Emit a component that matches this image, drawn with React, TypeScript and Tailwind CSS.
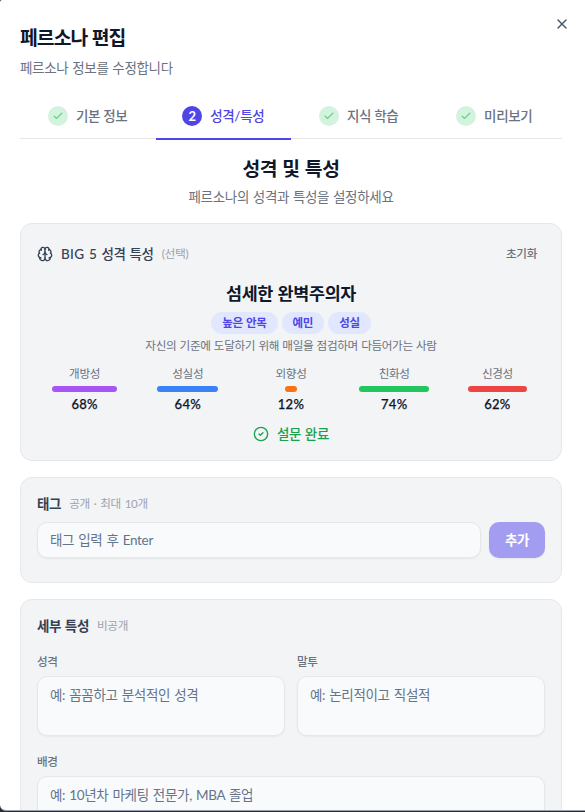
import { Brain, Check, CircleCheck, X } from "lucide-react";

const steps = [
  { label: "기본 정보", active: false },
  { label: "성격/특성", active: true },
  { label: "지식 학습", active: false },
  { label: "미리보기", active: false },
];

const traits = [
  { label: "개방성", value: 68, color: "bg-[#a855f7]" },
  { label: "성실성", value: 64, color: "bg-[#3b82f6]" },
  { label: "외향성", value: 12, color: "bg-[#f97316]" },
  { label: "친화성", value: 74, color: "bg-[#22c55e]" },
  { label: "신경성", value: 62, color: "bg-[#ef4444]" },
];

const keywords = ["높은 안목", "예민", "성실"];

const card = "rounded-xl border border-[#e5e7eb] bg-[#f3f4f6] px-4";
const field =
  "block w-full resize-none rounded-[10px] border border-[#e5e7eb] bg-[#f9fafb] px-3 text-[13.5px] leading-5 text-[#334155] shadow-xs outline-none [word-spacing:0.07em] placeholder:text-[#64748b]";

function Steps() {
  return (
    <nav className="mt-4 grid h-[45px] grid-cols-4 border-b border-[#e5e7eb]">
      {steps.map((step) => (
        <button
          key={step.label}
          className={
            step.active
              ? "flex h-[46px] items-center justify-center gap-2 border-b-2 border-[#4f46e5] font-medium text-[#4f46e5]"
              : "flex h-[46px] items-center justify-center gap-2 border-b-2 border-transparent font-medium text-[#6b7280]"
          }
        >
          {step.active ? (
            <span className="flex size-5 items-center justify-center rounded-full bg-[#4f46e5] text-[13px] leading-none font-bold text-white">
              2
            </span>
          ) : (
            <span className="flex size-5 items-center justify-center rounded-full bg-[#d3f3df] text-[#64d38c]">
              <Check className="size-3" strokeWidth={2.2} />
            </span>
          )}
          <span className="whitespace-nowrap">{step.label}</span>
        </button>
      ))}
    </nav>
  );
}

function BigFive() {
  return (
    <section className={`${card} mt-4 h-[238px] pt-4`}>
      <div className="flex h-7 items-center">
        <Brain className="size-4 text-[#334155]" />
        <h3 className="ml-2 font-medium text-[#334155]">
          <span className="tracking-[0.025em]">BIG 5 </span>성격 특성
        </h3>
        <span className="ml-2 text-[11.8px] text-[#9ca3af]">(선택)</span>
        <button className="mr-2 ml-auto text-[11.6px] font-medium text-[#6b7280]">초기화</button>
      </div>
      <h4 className="mt-3 text-center text-[17.4px] leading-7 font-bold text-[#0f172a]">섬세한 완벽주의자</h4>
      <div className="mt-1 flex justify-center gap-1">
        {keywords.map((word) => (
          <span
            key={word}
            className="flex h-[22px] items-center rounded-full bg-[#e0e7ff] px-[11px] text-[11.5px] font-semibold text-[#4f46e5]"
          >
            {word}
          </span>
        ))}
      </div>
      <p className="mt-1 text-center text-[11.6px] leading-4 tracking-[-0.03em] text-[#6b7280]">
        자신의 기준에 도달하기 위해 매일을 점검하며 다듬어가는 사람
      </p>
      <div className="mt-3 grid grid-cols-5 gap-2">
        {traits.map((trait) => (
          <div key={trait.label} className="flex flex-col items-center">
            <span className="text-[11.6px] leading-4 text-[#6b7280]">{trait.label}</span>
            <div className="mt-1 flex h-1.5 w-full justify-center">
              <div className={`h-full rounded-full ${trait.color}`} style={{ width: `${trait.value}%` }} />
            </div>
            <span className="mt-1 text-[13px] leading-4 font-medium tracking-[0.02em] text-[#0f172a] [-webkit-text-stroke:0.25px_#0f172a]">
              {trait.value}%
            </span>
          </div>
        ))}
      </div>
      <div className="mt-3 flex items-center justify-center gap-2 font-medium text-[#16a34a]">
        <CircleCheck className="size-4" />
        <span>설문 완료</span>
      </div>
    </section>
  );
}

function Tags() {
  return (
    <section className={`${card} mt-4 h-[106px] pt-4`}>
      <div className="flex h-5 items-center gap-2">
        <h3 className="font-bold text-[#334155]">태그</h3>
        <span className="text-[11.6px] text-[#9ca3af] [word-spacing:0.1em]">공개 · 최대 10개</span>
      </div>
      <div className="mt-2 flex gap-2">
        <input className={`${field} h-9`} placeholder="태그 입력 후 Enter" />
        <button className="h-9 w-14 shrink-0 rounded-[10px] bg-[#a29df0] font-bold text-white shadow-xs">추가</button>
      </div>
    </section>
  );
}

function Details() {
  return (
    <section className={`${card} mt-4 h-80 pt-4`}>
      <div className="flex h-5 items-center gap-2">
        <h3 className="font-bold text-[#334155]">세부 특성</h3>
        <span className="text-[11.6px] text-[#9ca3af]">비공개</span>
      </div>
      <div className="mt-4 grid grid-cols-2 gap-x-3 gap-y-4">
        <label>
          <span className="block text-[11.6px] leading-5 font-medium text-[#6b7280]">성격</span>
          <textarea className={`${field} mt-1 h-[60px] py-2`} placeholder="예: 꼼꼼하고 분석적인 성격" />
        </label>
        <label>
          <span className="block text-[11.6px] leading-5 font-medium text-[#6b7280]">말투</span>
          <textarea className={`${field} mt-1 h-[60px] py-2`} placeholder="예: 논리적이고 직설적" />
        </label>
        <label className="col-span-2">
          <span className="block text-[11.6px] leading-5 font-medium text-[#6b7280]">배경</span>
          <textarea className={`${field} mt-1 h-[60px] py-2`} placeholder="예: 10년차 마케팅 전문가, MBA 졸업" />
        </label>
      </div>
    </section>
  );
}

export default function App() {
  return (
    <div className="h-[812px] w-[585px] overflow-hidden bg-[#2b2c31] pb-px font-['Lato','Noto_Sans_CJK_KR',sans-serif] text-[13.5px] leading-5 tracking-[-0.024em] [word-spacing:0.05em]">
      <div className="relative h-full overflow-hidden rounded-tl-[2px] rounded-bl-md border-b border-gray-400 bg-white pr-[23px] pl-5">
        <button className="absolute top-4 right-[15px]" aria-label="닫기">
          <X className="size-4 text-[#475569]" />
        </button>
        <h1 className="pt-6 text-[19.3px] leading-7 font-bold tracking-[-0.047em] text-[#0f172a]">페르소나 편집</h1>
        <p className="mt-1.5 text-[#6b7280]">페르소나 정보를 수정합니다</p>
        <Steps />
        <h2 className="mt-4 text-center text-[19.3px] leading-7 font-bold text-[#0f172a]">성격 및 특성</h2>
        <p className="mt-1 text-center text-[#6b7280]">페르소나의 성격과 특성을 설정하세요</p>
        <BigFive />
        <Tags />
        <Details />
      </div>
    </div>
  );
}
